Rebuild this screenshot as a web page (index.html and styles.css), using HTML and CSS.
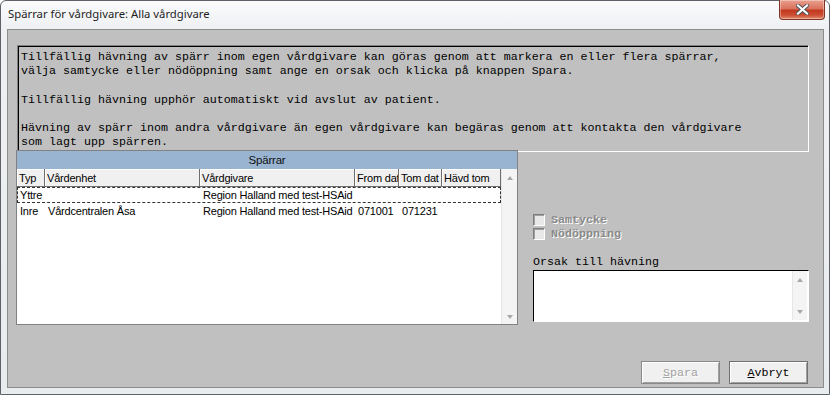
FILE: index.html
```html
<!DOCTYPE html>
<html lang="sv">
<head>
<meta charset="utf-8">
<title>Spärrar för vårdgivare</title>
<link rel="stylesheet" href="styles.css">
</head>
<body>
<div class="window">
  <div class="titlebar">
    <span class="title">Spärrar för vårdgivare: Alla vårdgivare</span>
    <div class="close">
      <svg width="13" height="11" viewBox="0 0 13 11">
        <path d="M2 1.5 L11 9.5 M11 1.5 L2 9.5" stroke="#4a4f57" stroke-width="4" stroke-linecap="square" fill="none"/>
        <path d="M2 1.5 L11 9.5 M11 1.5 L2 9.5" stroke="#ffffff" stroke-width="2.2" stroke-linecap="square" fill="none"/>
      </svg>
    </div>
  </div>
  <div class="client">
    <div class="info">Tillfällig hävning av spärr inom egen vårdgivare kan göras genom att markera en eller flera spärrar,
välja samtycke eller nödöppning samt ange en orsak och klicka på knappen Spara.

Tillfällig hävning upphör automatiskt vid avslut av patient.

Hävning av spärr inom andra vårdgivare än egen vårdgivare kan begäras genom att kontakta den vårdgivare
som lagt upp spärren.</div>
    <div class="main">
      <div class="list">
        <div class="list-head">Spärrar</div>
        <div class="list-body">
          <div class="grid">
            <div class="cols">
              <div class="col c1">Typ</div>
              <div class="col c2">Vårdenhet</div>
              <div class="col c3">Vårdgivare</div>
              <div class="col c4">From dat</div>
              <div class="col c5">Tom dat</div>
              <div class="col c6">Hävd tom</div>
            </div>
            <div class="row focus">
              <div class="cell c1">Yttre</div>
              <div class="cell c2"></div>
              <div class="cell c3">Region Halland med test-HSAid</div>
              <div class="cell c4"></div>
              <div class="cell c5"></div>
              <div class="cell c6"></div>
            </div>
            <div class="row">
              <div class="cell c1">Inre</div>
              <div class="cell c2">Vårdcentralen Åsa</div>
              <div class="cell c3">Region Halland med test-HSAid</div>
              <div class="cell c4">071001</div>
              <div class="cell c5">071231</div>
              <div class="cell c6"></div>
            </div>
          </div>
          <div class="vscroll">
            <span class="arrow up"></span>
            <span class="arrow down"></span>
          </div>
        </div>
      </div>
      <div class="side">
        <label class="check"><span class="box"></span><span class="dis">Samtycke</span></label>
        <label class="check"><span class="box"></span><span class="dis">Nödöppning</span></label>
        <div class="reason-label">Orsak till hävning</div>
        <div class="reason">
          <div class="reason-text"></div>
          <div class="vscroll small">
            <span class="arrow up"></span>
            <span class="arrow down"></span>
          </div>
        </div>
      </div>
    </div>
    <div class="buttons">
      <div class="btn disabled"><span class="dis"><u>S</u>para</span></div>
      <div class="btn"><u>A</u>vbryt</div>
    </div>
  </div>
</div>
</body>
</html>
```
FILE: styles.css
```css
html, body {
  margin: 0;
  padding: 0;
  width: 830px;
  height: 395px;
  overflow: hidden;
  background: #ffffff;
}

.window {
  box-sizing: border-box;
  width: 830px;
  height: 395px;
  border: 1px solid #5e6268;
  border-radius: 6px 6px 0 0;
  background: linear-gradient(#fbfbfc 0px, #eef0f3 28px, #e9ecef 100%);
  padding: 0 5px 6px 6px;
  display: flex;
  flex-direction: column;
}

.titlebar {
  height: 28px;
  display: flex;
  align-items: flex-start;
}

.title {
  font-family: "Noto Sans", "Open Sans", sans-serif;
  font-size: 11.3px;
  color: #1e1e1e;
  line-height: 16px;
  margin-top: 5px;
  margin-left: 1px;
}

.close {
  margin-left: auto;
  margin-top: -1px;
  margin-right: -1px;
  box-sizing: border-box;
  width: 46px;
  height: 20px;
  border: 1px solid #7d3427;
  border-top: none;
  border-radius: 0 0 4px 4px;
  background: linear-gradient(#eaa08f 0%, #d9735e 45%, #c2391f 55%, #cc4f33 80%, #e08c70 100%);
  display: flex;
  align-items: center;
  justify-content: center;
  box-shadow: inset 0 0 0 1px rgba(255,255,255,0.35);
}

.close svg {
  display: block;
}

.client {
  flex: 1;
  border: 1px solid #8c8c8c;
  background: #c0c0c0;
  padding: 15px 0 0 8px;
  display: flex;
  flex-direction: column;
}

.info {
  box-sizing: border-box;
  width: 792px;
  height: 107px;
  margin-left: 1px;
  border: 1px solid;
  border-color: #808080 #ffffff #ffffff #808080;
  box-shadow: inset 1px 1px 0 #000000;
  padding: 4px 0 0 3px;
  white-space: pre;
  font-family: "Liberation Mono", "Courier New", monospace;
  font-size: 11.67px;
  line-height: 14.2px;
  color: #000000;
  overflow: hidden;
}

.main {
  display: flex;
  margin-top: -2px;
}

.list {
  box-sizing: border-box;
  width: 502px;
  height: 175px;
  border: 1px solid #828282;
  background: #ffffff;
  display: flex;
  flex-direction: column;
}

.list-head {
  height: 18px;
  background: #99b4d1;
  text-align: center;
  font-family: "Liberation Sans", Arial, sans-serif;
  font-size: 11.5px;
  letter-spacing: -0.2px;
  line-height: 18px;
  color: #101010;
}

.list-body {
  flex: 1;
  display: flex;
}

.grid {
  width: 484px;
  font-family: "Liberation Sans", Arial, sans-serif;
  font-size: 11px;
  letter-spacing: -0.2px;
  color: #000000;
}

.cols {
  display: flex;
  height: 18px;
}

.col {
  box-sizing: border-box;
  height: 18px;
  background: #f0f0f0;
  border-right: 1px solid #6e6e6e;
  border-bottom: 1px solid #6e6e6e;
  box-shadow: inset 1px 1px 0 #ffffff;
  padding: 0 0 0 2px;
  line-height: 18px;
  white-space: nowrap;
  overflow: hidden;
}

.row {
  display: flex;
  height: 16px;
  box-sizing: border-box;
}

.row.focus {
  outline: 1px dashed #333333;
  outline-offset: -1px;
  width: 484px;
}

.cell {
  box-sizing: border-box;
  line-height: 16px;
  padding-left: 3px;
  white-space: nowrap;
  overflow: hidden;
}

.c1 { width: 28px; }
.c2 { width: 155px; }
.c3 { width: 155px; }
.c4 { width: 44px; }
.c5 { width: 43px; }
.c6 { width: 59px; }

.vscroll {
  width: 16px;
  background: #f4f4f4;
  border-left: 1px solid #e6e6e6;
  box-sizing: border-box;
  display: flex;
  flex-direction: column;
  justify-content: space-between;
  align-items: center;
  padding: 7px 0 5px 0;
}

.arrow {
  width: 0;
  height: 0;
  border-left: 3.5px solid transparent;
  border-right: 3.5px solid transparent;
}

.arrow.up {
  border-bottom: 4px solid #a8a8a8;
}

.arrow.down {
  border-top: 4px solid #a8a8a8;
}

.side {
  margin-left: 15px;
  width: 276px;
  padding-top: 63px;
  display: flex;
  flex-direction: column;
  font-family: "Liberation Mono", "Courier New", monospace;
  font-size: 11.67px;
}

.check {
  display: flex;
  align-items: center;
  height: 14px;
}

.box {
  box-sizing: border-box;
  width: 12px;
  height: 12px;
  border: 1px solid;
  border-color: #7c7c7c #ffffff #ffffff #7c7c7c;
  background: #e8e8e8;
  box-shadow: inset 1px 1px 0 #a0a0a0;
  margin-right: 6px;
}

.dis {
  color: #8a8a8a;
  text-shadow: 1px 1px 0 #ffffff;
  font-weight: bold;
}

.reason-label {
  margin-top: 14px;
  line-height: 14px;
  color: #000000;
}

.reason {
  box-sizing: border-box;
  margin-top: 1px;
  width: 276px;
  height: 52px;
  border: 1px solid;
  border-color: #000000 #ffffff #ffffff #000000;
  background: #ffffff;
  display: flex;
}

.reason-text {
  flex: 1;
}

.vscroll.small {
  width: 15px;
  margin: 0 1px 1px 0;
  padding: 7px 0 6px 0;
}

.buttons {
  display: flex;
  justify-content: flex-end;
  gap: 9px;
  margin-top: 36px;
  padding-right: 15px;
}

.btn {
  box-sizing: border-box;
  width: 79px;
  height: 23px;
  background: #f0f0f0;
  border: 1px solid #707070;
  box-shadow: inset 1px 1px 0 #ffffff, inset -1px -1px 0 #a0a0a0;
  display: flex;
  align-items: center;
  justify-content: center;
  font-family: "Liberation Mono", "Courier New", monospace;
  font-size: 11.67px;
  color: #000000;
}

.btn.disabled {
  border-color: #8a8a8a;
}

.btn.disabled .dis {
  font-weight: normal;
  color: #a0a0a0;
}
```
